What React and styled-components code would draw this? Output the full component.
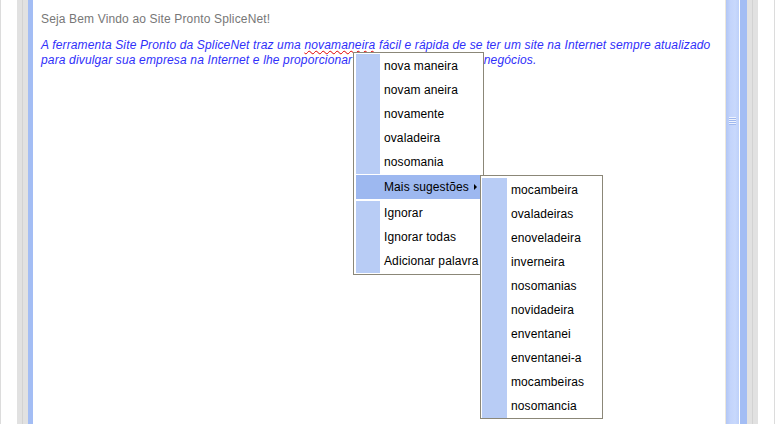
import React from 'react';
import styled, { createGlobalStyle } from 'styled-components';

const GlobalStyle = createGlobalStyle`
  body {
    margin: 0;
    font-family: "Liberation Sans", Arial, sans-serif;
    background: #fff;
  }
`;

const suggestions = ['nova maneira', 'novam aneira', 'novamente', 'ovaladeira', 'nosomania'];
const actions = ['Ignorar', 'Ignorar todas', 'Adicionar palavra'];
const more = [
  'mocambeira',
  'ovaladeiras',
  'enoveladeira',
  'inverneira',
  'nosomanias',
  'novidadeira',
  'enventanei',
  'enventanei-a',
  'mocambeiras',
  'nosomancia',
];

const App = () => {
  return (
    <>
      <GlobalStyle />
      <Page>
        <Band $w={1} $c="#dcdcdc" />
        <Band $w={16} $c="#fff" />
        <Band $w={5} $c="#e1e1e1" />
        <Band $w={1} $c="#d2d2d2" />
        <Band $w={5} $c="#e1e1e1" />
        <Band $w={5} $c="#a3bdf4" />

        <Content>
          <Greeting>Seja Bem Vindo ao Site Pronto SpliceNet!</Greeting>
          <Intro>
            A ferramenta Site Pronto da SpliceNet traz uma <Misspelled>novamaneira</Misspelled> fácil e
            rápida de se ter um site na Internet sempre atualizado
            <br />
            para divulgar sua empresa na Internet e lhe proporcionar mais oportunidades de negócios.
          </Intro>
        </Content>

        <Band $w={1} $c="#ece7dc" />
        <ScrollThumb>
          <Grip />
        </ScrollThumb>
        <Band $w={1} $c="#fff" />
        <Band $w={7} $c="#a3bdf4" />
        <Band $w={5} $c="#e1e1e1" />
        <Band $w={1} $c="#d2d2d2" />
        <Band $w={5} $c="#e1e1e1" />
        <Band $w={16} $c="#fff" />
        <Band $w={1} $c="#dcdcdc" />

        <Menu $left={353} $top={52} $width={131}>
          {suggestions.map(s => (
            <Item key={s}>{s}</Item>
          ))}
          <Item $active>
            Mais sugestões
            <Arrow />
          </Item>
          {actions.map(a => (
            <Item key={a}>{a}</Item>
          ))}
        </Menu>

        <SubMenu $left={480} $top={175} $width={123}>
          {more.map(s => (
            <Item key={s} $sub>
              {s}
            </Item>
          ))}
        </SubMenu>
      </Page>
    </>
  );
};

export default App;

const Page = styled.div`
  position: relative;
  display: flex;
  width: 775px;
  height: 424px;
  overflow: hidden;
  background: #fff;
`;

const Band = styled.div`
  flex: 0 0 ${p => p.$w}px;
  background: ${p => p.$c};
`;

const Content = styled.div`
  flex: 1;
  padding: 12px 8px;
  font-size: 12px;
  line-height: 15px;
  letter-spacing: 0.15px;
`;

const Greeting = styled.div`
  color: #777;
`;

const Intro = styled.p`
  margin: 11px 0 0;
  font-style: italic;
  color: #2f2ffa;
  white-space: nowrap;
`;

const Misspelled = styled.span`
  text-decoration: underline wavy #e00000;
  text-decoration-thickness: 1px;
  text-underline-offset: 1px;
`;

const ScrollThumb = styled.div`
  flex: 0 0 13px;
  background: linear-gradient(to right, #b2c6f5 0, #c3d4fb 35%, #c8d8fc 70%, #bdd0f9 100%);
`;

const Grip = styled.div`
  width: 7px;
  height: 8px;
  margin: 117px auto 0;
  background: repeating-linear-gradient(to bottom, #eef3fe 0 1px, #9fb8ef 1px 2px);
`;

const Menu = styled.div`
  position: absolute;
  left: ${p => p.$left}px;
  top: ${p => p.$top}px;
  width: ${p => p.$width}px;
  box-sizing: border-box;
  padding: 1px 1px 1px 2px;
  background: #fff;
  border: 1px solid #8b8778;
  font-size: 12px;
  letter-spacing: 0.1px;
  color: #000;
`;

const SubMenu = styled(Menu)`
  padding: 2px 1px 0 1px;
`;

const Item = styled.div`
  display: flex;
  align-items: center;
  height: 24px;
  padding-left: ${p => (p.$sub ? 29 : 28)}px;
  margin: ${p => (p.$active ? '1px 0 2px' : '0')};
  white-space: nowrap;
  background: ${p =>
    p.$active ? '#9db8f0' : `linear-gradient(to right, #b8ccf5 ${p.$sub ? 25 : 24}px, #fff 0)`};
`;

const Arrow = styled.span`
  margin-left: auto;
  margin-right: 5px;
  width: 0;
  height: 0;
  border-top: 3px solid transparent;
  border-bottom: 3px solid transparent;
  border-left: 3px solid #000;
`;
